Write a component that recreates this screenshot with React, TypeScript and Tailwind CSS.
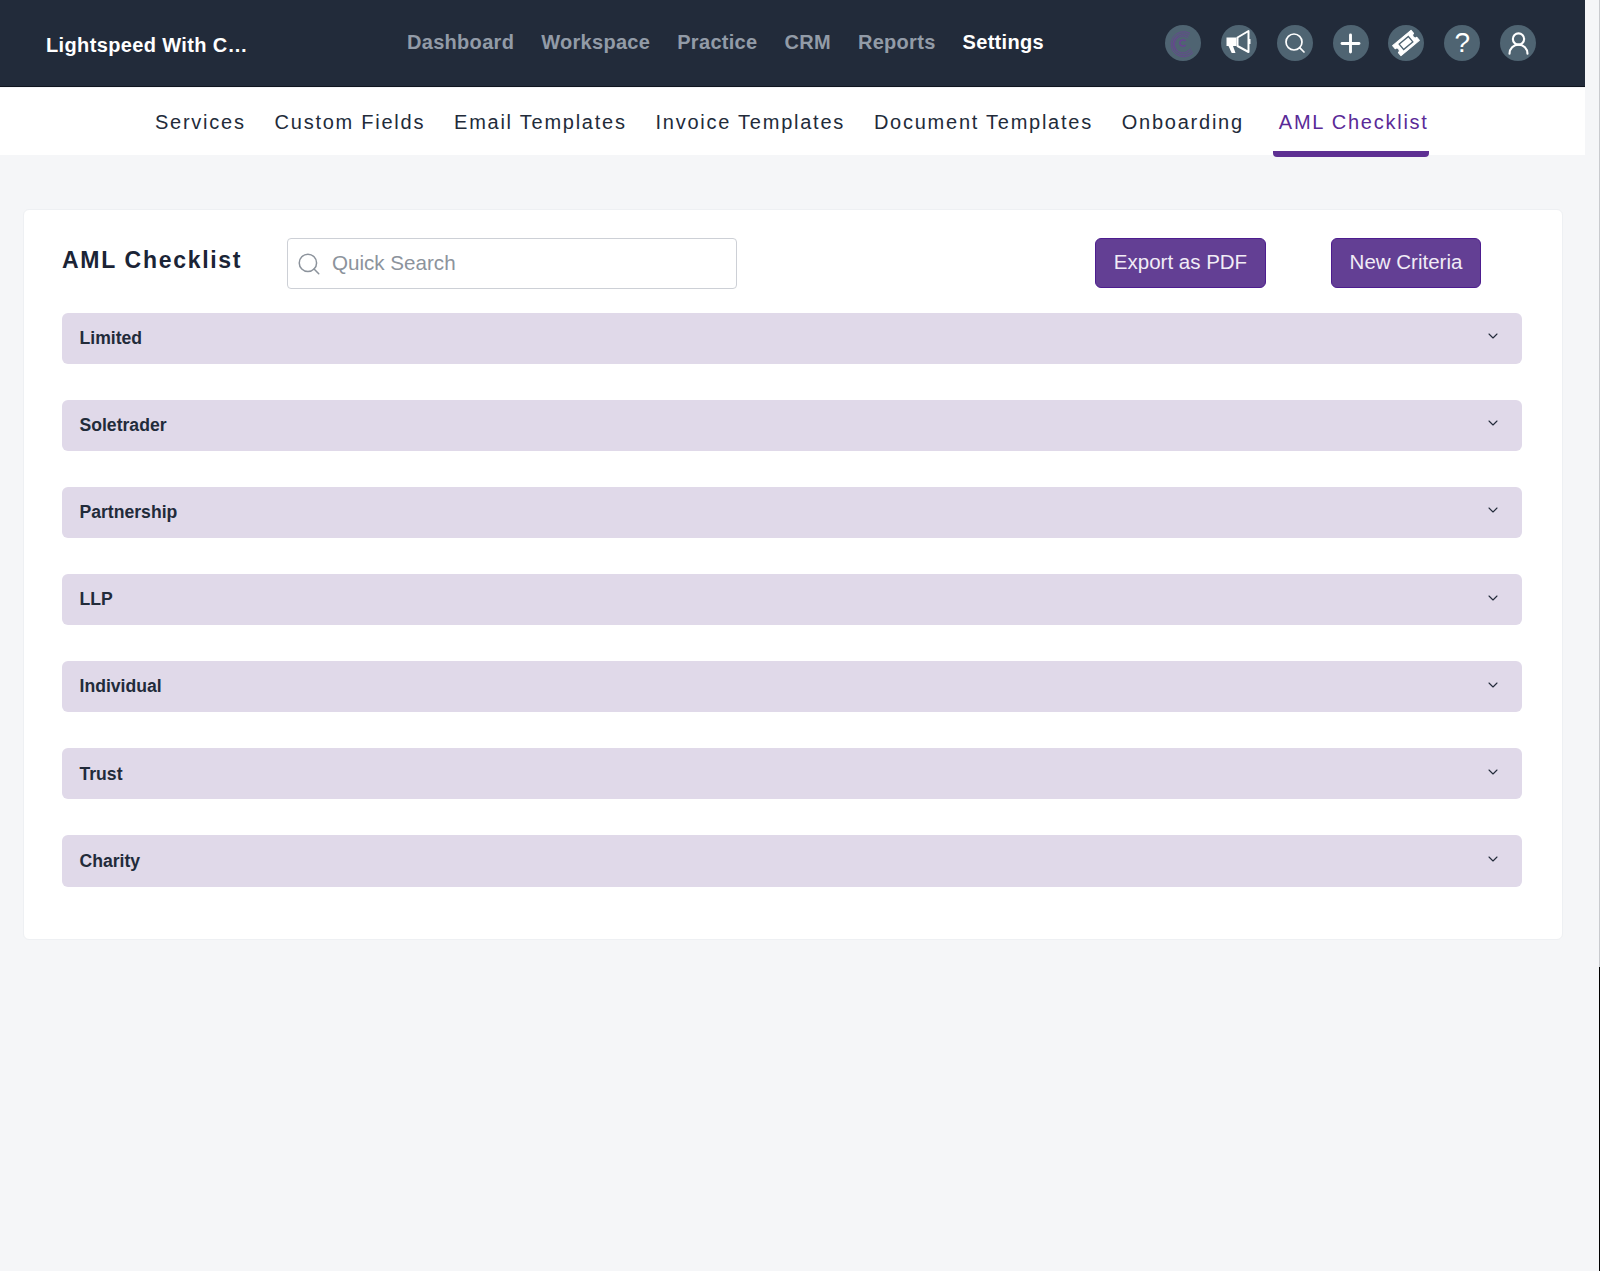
import { ChevronDown, Plus, Search, UserRound } from "lucide-react";

const navItems = ["Dashboard", "Workspace", "Practice", "CRM", "Reports", "Settings"];
const tabs = ["Services", "Custom Fields", "Email Templates", "Invoice Templates", "Document Templates", "Onboarding"];
const categories = ["Limited", "Soletrader", "Partnership", "LLP", "Individual", "Trust", "Charity"];

const font = "font-['Liberation_Sans',Arial,sans-serif]";

const Round = ({ children }: { children: React.ReactNode }) => (
  <div className="w-[36px] h-[36px] rounded-full bg-[#4f6472] flex items-center justify-center shrink-0">
    {children}
  </div>
);

const CompanyLogo = () => (
  <svg viewBox="0 0 36 36" className="w-[36px] h-[36px]" fill="none" stroke="#6b3f96">
    <g strokeWidth="0.7">
      <path d="M25 8.500a12.500 12.500 0 1 0 3 19" />
      <path d="M24 10.500a10.500 10.500 0 1 0 3 15" />
      <path d="M23 12.500a8.500 8.500 0 1 0 2.500 11" />
      <path d="M13 11.500a8 8 0 0 0-1 14" />
    </g>
    <path d="M20.500 16a3.200 3.200 0 1 0 0 4" strokeWidth="1.300" />
  </svg>
);

const MegaphoneIcon = () => (
  <svg viewBox="0 0 36 36" className="w-[36px] h-[36px]">
    <path d="M5.500 12.500h10v8.500h-10z" fill="#fff" />
    <path d="M7.500 21h4.500l2.500 7h-3.800z" fill="#fff" />
    <path d="M16.500 12.500 27.500 6v21l-11-6z" fill="none" stroke="#fff" strokeWidth="2" strokeLinejoin="round" />
    <path d="M27.500 14h2v5h-2z" fill="#fff" />
  </svg>
);

const TicketIcon = () => (
  <svg viewBox="0 0 36 36" className="w-[36px] h-[36px]">
    <g transform="rotate(-40 18 18)">
      <path
        d="M6 11.500h24v4a2.500 2.500 0 0 0 0 5v4H6v-4a2.500 2.500 0 0 0 0-5z"
        fill="#fff"
        stroke="#fff"
        strokeLinejoin="round"
      />
      <rect x="12" y="14.500" width="12" height="7" fill="none" stroke="#4f6472" strokeWidth="1.300" />
    </g>
  </svg>
);

export default function App() {
  return (
    <div className={`${font} relative w-[1600px] h-[1271px] overflow-hidden bg-[#f5f6f8]`}>
      <div className="w-[1585px]">
        {/* Top bar */}
        <header className="h-[87px] bg-[#222b3a] border-b border-[#10151f] flex items-center pl-[46px] pr-[49px]">
          <div className="w-[361px] pt-[3px] text-[20px] font-bold tracking-[0.36px] text-white shrink-0">
            Lightspeed With C…
          </div>
          <nav className="flex gap-[27px] pb-[2px]">
            {navItems.map((item) => (
              <span
                key={item}
                className={`text-[20px] font-bold tracking-[0.3px] ${item === "Settings" ? "text-white" : "text-[#929ba7]"}`}
              >
                {item}
              </span>
            ))}
          </nav>
          <div className="ml-auto flex gap-[19.800px]">
            <Round>
              <CompanyLogo />
            </Round>
            <Round>
              <MegaphoneIcon />
            </Round>
            <Round>
              <Search className="w-[24px] h-[24px] text-white" strokeWidth={1.7} />
            </Round>
            <Round>
              <Plus className="w-[29px] h-[29px] text-white" strokeWidth={2.4} />
            </Round>
            <Round>
              <TicketIcon />
            </Round>
            <Round>
              <span className="text-[28px] text-white leading-none">?</span>
            </Round>
            <Round>
              <UserRound className="w-[27px] h-[27px] text-white" strokeWidth={1.9} />
            </Round>
          </div>
        </header>

        {/* Settings tabs */}
        <div className="h-[67px] mt-[1px] bg-white flex pl-[155px] text-[20px] tracking-[1.750px] text-[#222b3a] whitespace-nowrap">
          <div className="flex gap-[28.900px] pt-[19px]">
            {tabs.map((tab) => (
              <span key={tab}>{tab}</span>
            ))}
          </div>
          <div className="relative ml-[29px] pt-[19px] pl-[6px] w-[156px] text-[#5a2a97]">
            AML Checklist
            <div className="absolute left-0 right-0 top-[63px] h-[6px] bg-[#5e3093] rounded-b-[4px]" />
          </div>
        </div>

        {/* AML card */}
        <main className="pl-[23px] pr-[22px] pt-[54px]">
          <section className="h-[731px] bg-white rounded-[6px] border border-[#eef0f3] pl-[38px] pr-[40px] pt-[28px]">
            <div className="flex h-[51px]">
              <h1 className="w-[225px] pt-[5px] text-[23px] font-bold tracking-[1.700px] text-[#1b2436]">AML Checklist</h1>
              <div className="w-[450px] h-[51px] rounded-[4px] border border-[#cdd0d6] flex items-center pl-[8px] gap-[10px]">
                <Search className="w-[26px] h-[26px] text-[#8c939c]" strokeWidth={1.4} />
                <span className="pb-[1px] text-[20.600px] text-[#8c939c]">Quick Search</span>
              </div>
              <button className="ml-[358px] w-[171px] h-[50px] pb-[1px] rounded-[6px] bg-[#633f94] border border-[#4d1d8f] text-[20.500px] text-[#f1ecf6]">
                Export as PDF
              </button>
              <button className="ml-[65px] w-[150px] h-[50px] pb-[1px] rounded-[6px] bg-[#633f94] border border-[#4d1d8f] text-[20.500px] text-[#f1ecf6]">
                New Criteria
              </button>
            </div>
            <div className="mt-[23.500px] flex flex-col gap-[35.600px]">
              {categories.map((name) => (
                <div
                  key={name}
                  className="h-[51.500px] rounded-[6px] bg-[#e0d9e9] flex items-center justify-between pl-[17.500px] pr-[21.500px]"
                >
                  <span className="text-[17.600px] font-bold text-[#222b3a]">{name}</span>
                  <ChevronDown className="w-[16px] h-[16px] mb-[4px] text-[#222b3a]" strokeWidth={1.6} />
                </div>
              ))}
            </div>
          </section>
        </main>
      </div>
      {/* window edge */}
      <div className="absolute right-0 top-0 h-[967px] w-px bg-[#c9cbcf]" />
      <div className="absolute right-0 top-[967px] bottom-0 w-px bg-black" />
    </div>
  );
}
